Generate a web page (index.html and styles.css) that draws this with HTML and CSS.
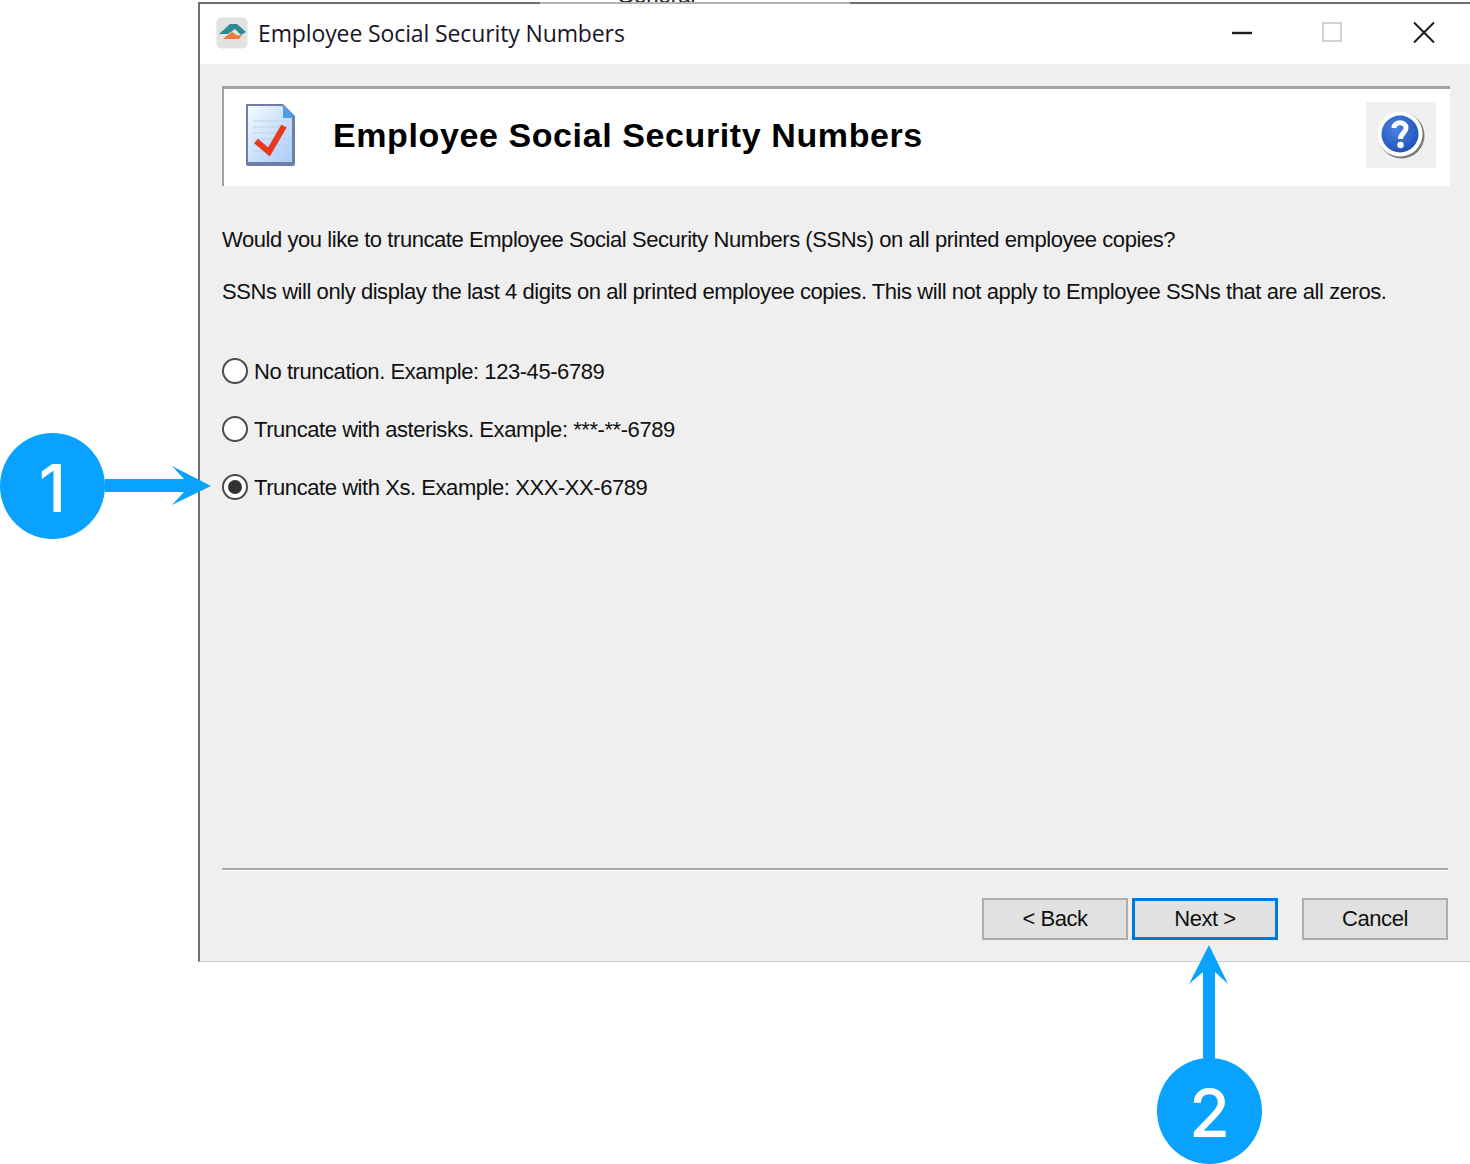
FILE: index.html
```html
<!DOCTYPE html>
<html lang="en">
<head>
<meta charset="utf-8">
<title>Employee Social Security Numbers</title>
<link rel="stylesheet" href="styles.css">
</head>
<body>
<div class="canvas">
  <main class="window">
    <header class="titlebar">
      <svg class="app-icon" viewBox="0 0 32 32" aria-hidden="true">
        <rect x="0.5" y="0.5" width="31" height="31" rx="5" fill="#e2e2e2"/>
        <path d="M3 17 L14 7 L21 7 L30 15 L25 18 L19 12 L12 17 Z" fill="#2f8c93"/>
        <path d="M7 22 L16 15 L21 18.500 L26 18 L23 22 Z" fill="#ec7b3b"/>
      </svg>
      <span class="title-text">Employee Social Security Numbers</span>
      <div class="win-controls">
        <svg class="win-btn" viewBox="0 0 24 24" aria-hidden="true"><path d="M4 12 H24" stroke="#1c1c1c" stroke-width="2.400"/></svg>
        <svg class="win-btn" viewBox="0 0 24 24" aria-hidden="true"><rect x="3" y="2" width="18" height="18" fill="none" stroke="#d2d2d2" stroke-width="2"/></svg>
        <svg class="win-btn" viewBox="0 0 24 24" aria-hidden="true"><path d="M2 1.500 L22 21.500 M22 1.500 L2 21.500" stroke="#1c1c1c" stroke-width="2"/></svg>
      </div>
    </header>
    <div class="body">
      <section class="banner">
        <svg class="doc-icon" viewBox="0 0 50 62" aria-hidden="true">
          <defs>
            <linearGradient id="docfill" x1="0" y1="0" x2="1" y2="1"><stop offset="0" stop-color="#f4f9ff"/><stop offset="1" stop-color="#a9ccf5"/></linearGradient>
          </defs>
          <path d="M0 1 Q0 0 1 0 H37 L49 12 V60 Q49 62 47 62 H2 Q0 62 0 60 Z" fill="#6f7ea8"/>
          <path d="M2 2 H36 L46 12 V58 H2 Z" fill="url(#docfill)"/>
          <path d="M37 1 L47 11 V14 H37 Z" fill="#4f9fe8"/>
          <path d="M7 17 H42 M7 23 H42 M7 29 H42 M7 35 H42 M7 41 H42 M7 47 H42" stroke="#bcd2ec" stroke-width="1.200"/>
          <path d="M10 37 L23 48 L38 22" fill="none" stroke="#e8391f" stroke-width="6"/>
        </svg>
        <h1 class="banner-title">Employee Social Security Numbers</h1>
        <div class="help-box">
          <svg class="help-icon" viewBox="0 0 48 48" aria-hidden="true">
            <defs>
              <radialGradient id="helpfill" cx="0.4" cy="0.35" r="0.7"><stop offset="0" stop-color="#4b84e0"/><stop offset="1" stop-color="#1e50b8"/></radialGradient>
            </defs>
            <circle cx="24.500" cy="24.500" r="23" fill="#7a7a7a"/>
            <circle cx="23" cy="23" r="22.500" fill="#ffffff"/>
            <circle cx="23" cy="23" r="18.500" fill="url(#helpfill)"/>
            <path d="M17 17 C17 10 29 10 29 17 C29 22 23.500 22 23.500 28" fill="none" stroke="#fff" stroke-width="5"/>
            <circle cx="23.500" cy="34" r="3.200" fill="#fff"/>
          </svg>
        </div>
      </section>
      <p class="question">Would you like to truncate Employee Social Security Numbers (SSNs) on all printed employee copies?</p>
      <p class="note">SSNs will only display the last 4 digits on all printed employee copies. This will not apply to Employee SSNs that are all zeros.</p>
      <div class="options">
        <div class="option"><span class="radio"></span><span class="option-text">No truncation. Example: 123-45-6789</span></div>
        <div class="option"><span class="radio"></span><span class="option-text">Truncate with asterisks. Example: ***-**-6789</span></div>
        <div class="option"><span class="radio is-on"></span><span class="option-text">Truncate with Xs. Example: XXX-XX-6789</span></div>
      </div>
      <div class="spacer"></div>
      <hr class="rule">
      <footer class="actions">
        <div class="btn">&lt; Back</div>
        <div class="btn is-default">Next &gt;</div>
        <div class="btn is-cancel">Cancel</div>
      </footer>
    </div>
  </main>

  <div class="behind"><span class="behind-text">General</span></div>
  <div class="badge badge-one"><span class="digit">1</span></div>
  <svg class="arrow arrow-one" viewBox="0 0 106 40" aria-hidden="true">
    <path d="M0 13 H79 L67 0 L106 20 L67 39 L79 26 H0 Z" fill="#0aa2ff"/>
  </svg>
  <div class="badge badge-two"><span class="digit">2</span></div>
  <svg class="arrow arrow-two" viewBox="0 0 40 116" aria-hidden="true">
    <path d="M14 116 V27 L0 39 L20 0 L39 39 L26 27 V116 Z" fill="#0aa2ff"/>
  </svg>
</div>
</body>
</html>
```
FILE: styles.css
```css
* { box-sizing: border-box; }
html, body { margin: 0; padding: 0; background: #fff; }
.canvas {
  position: relative;
  width: 1470px;
  height: 1164px;
  overflow: hidden;
  padding: 2px 0 0 198px;
  font-family: "Liberation Sans", Arial, sans-serif;
  color: #111;
}
.behind {
  position: absolute;
  left: 540px;
  top: 0;
  width: 310px;
  height: 4px;
  overflow: hidden;
  border-bottom: 2px solid #b4b4b4;
  background: #fff;
  padding-left: 77px;
}
.behind-text {
  display: block;
  margin-top: -13px;
  font-size: 22px;
  line-height: 18px;
  color: #222;
}
.window {
  position: relative;
  width: 1272px;
  height: 960px;
  background: #efefef;
  border-top: 2px solid #707070;
  border-left: 2px solid #707070;
  border-bottom: 1px solid #cfcfcf;
  display: flex;
  flex-direction: column;
}
.titlebar {
  height: 60px;
  flex: none;
  background: #fff;
  display: flex;
  align-items: center;
  padding: 0 0 2px 16px;
}
.app-icon { width: 32px; height: 32px; margin-right: 10px; }
.title-text {
  font-family: "Open Sans", "Noto Sans", sans-serif;
  font-size: 23px;
  letter-spacing: -0.12px;
  color: #1a1428;
}
.win-controls { margin-left: auto; display: flex; gap: 68px; padding-right: 34px; }
.win-btn { width: 24px; height: 24px; display: block; }
.body {
  flex: 1;
  display: flex;
  flex-direction: column;
  padding: 22px 22px 0 22px;
  min-height: 0;
}
.banner {
  height: 100px;
  flex: none;
  margin-right: -2px;
  background: #fff;
  border-top: 3px solid #a2a2a2;
  border-left: 2px solid #a2a2a2;
  display: flex;
  align-items: center;
  padding: 0 14px 5px 22px;
}
.doc-icon { width: 50px; height: 62px; flex: none; margin-right: 37px; }
.banner-title {
  margin: 0;
  font-size: 34px;
  font-weight: 700;
  letter-spacing: 0.6px;
  color: #000;
}
.help-box {
  margin-left: auto;
  width: 70px;
  height: 66px;
  background: #efefef;
  display: flex;
  align-items: center;
  justify-content: center;
}
.help-icon { width: 48px; height: 48px; }
.question, .note, .option, .btn { font-size: 22px; letter-spacing: -0.44px; }
.question { margin: 40px 0 0; line-height: 28px; }
.note { margin: 24px 0 0; line-height: 28px; }
.options { display: flex; flex-direction: column; gap: 30px; margin-top: 51px; }
.option { display: flex; align-items: center; gap: 6px; height: 28px; }
.option-text { padding-top: 2px; }
.radio {
  width: 26px;
  height: 26px;
  border-radius: 50%;
  border: 2px solid #4b4b4b;
  background: #fff;
  display: flex;
  align-items: center;
  justify-content: center;
  flex: none;
}
.radio.is-on::after {
  content: "";
  width: 14px;
  height: 14px;
  border-radius: 50%;
  background: #333;
}
.spacer { flex: 1; }
.rule { width: 100%; height: 3px; margin: 0; border: 0; border-top: 2px solid #a8a8a8; border-bottom: 1px solid #fff; }
.actions { display: flex; justify-content: flex-end; margin: 27px 0 21px; }
.btn {
  width: 146px;
  height: 42px;
  background: #e1e1e1;
  border: 2px solid #adadad;
  display: flex;
  align-items: center;
  justify-content: center;
}
.btn.is-default { border: 3px solid #0078d7; margin-left: 4px; }
.btn.is-cancel { margin-left: 24px; }
.badge {
  position: absolute;
  width: 105px;
  height: 106px;
  border-radius: 50%;
  background: #0aa2ff;
  color: #fff;
  font-family: "Inter", "Liberation Sans", sans-serif;
  font-size: 66px;
  font-weight: 500;
  display: flex;
  align-items: center;
  justify-content: center;
}
.digit { padding-top: 4px; }
.badge-one { left: 0; top: 433px; }
.badge-two { left: 1157px; top: 1058px; }
.arrow { position: absolute; display: block; }
.arrow-one { left: 105px; top: 466px; width: 106px; height: 40px; }
.arrow-two { left: 1189px; top: 945px; width: 40px; height: 116px; }
```
